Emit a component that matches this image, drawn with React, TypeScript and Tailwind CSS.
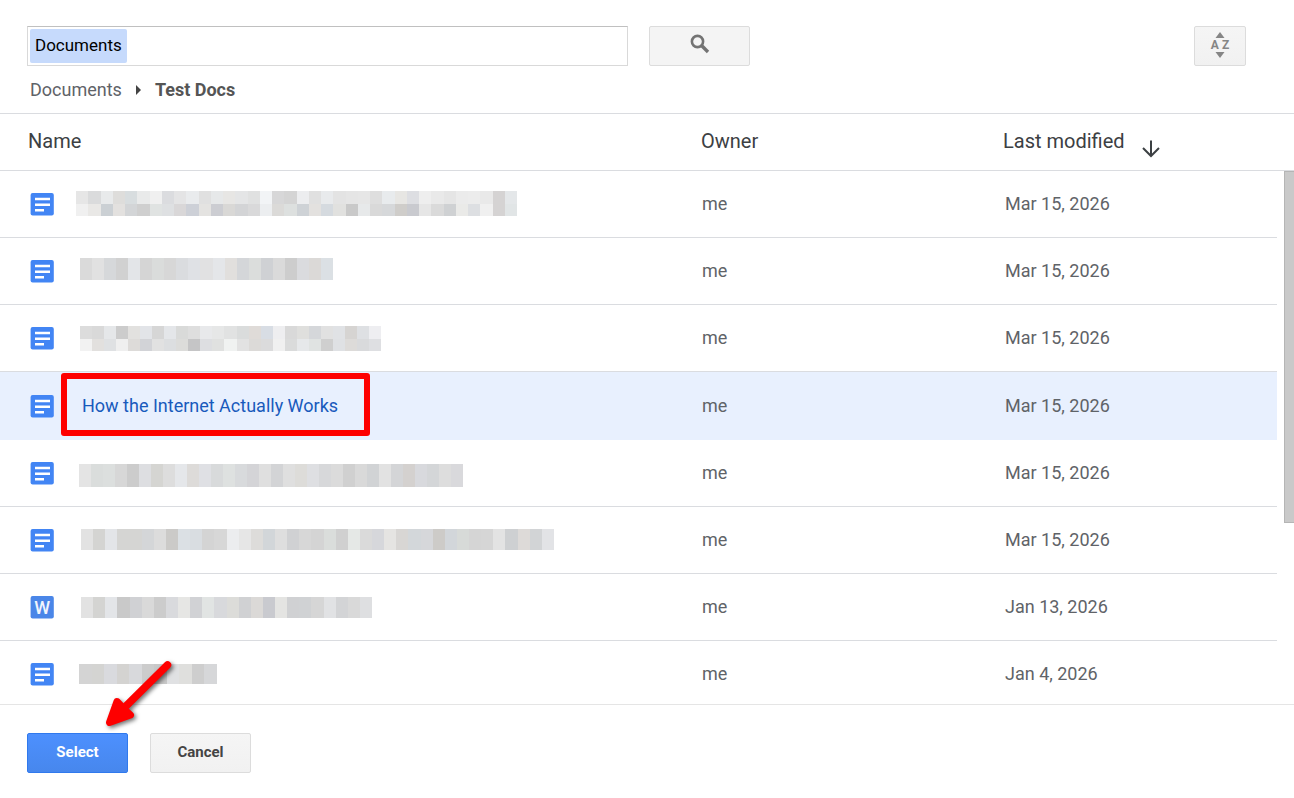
type Mosaic = {
  x: number
  y: number
  width: number
  height: number
  rows: string[]
}

type FileRow = {
  kind: "doc" | "word"
  name?: string
  mosaic?: Mosaic
  modified: string
}

const files: FileRow[] = [
  {
    kind: "doc",
    modified: "Mar 15, 2026",
    mosaic: {
      x: 0,
      y: 4,
      width: 441,
      height: 25,
      rows: [
        "e6e6e6 dadbdc e8eaeb dedddb d8dddf e9eaea f0f0f0 dbdcdf e4e4e5 e9ebed e0e0e0 e6e8e9 e7e6e4 e4e5e6 e0e1e1 f2f4f6 d7d7d8 d4d4d4 ecedef e0e0e0 e8eaec e3e3e3 e5e5e5 e6e6e6 dedede e8ebed e7e6e3 dddee2 eeeeee e9e9e9 e5e5e5 ebebeb ececec e9e9e9 d5d3d3 e4e7e9",
        "f0f0f0 e9e8e6 cbd0d4 e3e1df d3d5d7 cfcfcf e0e3e2 dee0e2 d9d7d8 cdd0d7 e4e3e1 cccdd2 d9d8d6 d3d4d6 d9d9da eceef0 dbdad8 dde0df ced2d6 e3e1df d5dadf e1e1df c9c9c9 e7e9ea d9d9d9 d6d8da cfcdca c9cacf e6e6e6 dadada cfd1d3 eaeae8 dddfe2 f0f0f0 d5d3d3 e1e5e6",
      ],
    },
  },
  {
    kind: "doc",
    modified: "Mar 15, 2026",
    mosaic: {
      x: 4,
      y: 4,
      width: 253,
      height: 22,
      rows: [
        "dadada e1e1e1 d6d8da d1d1d1 e3e5e8 d5d5d5 dadcdb d7d7d7 dadcdf dfe1e5 e1e1e2 e4e6e9 e1dfdd d4d6d9 dbdddc cfd1d4 dadada cdcdcd dadbde dbd9d7 dbe0e4",
      ],
    },
  },
  {
    kind: "doc",
    modified: "Mar 15, 2026",
    mosaic: {
      x: 4,
      y: 5,
      width: 301,
      height: 25,
      rows: [
        "dcdcdc d9d9d9 e5e7e9 cccccc e2e1df e2e4e8 d6d6d6 e4e6e9 d9dad9 dedede e8e9eb e6e7e7 e1e2e2 dadcdc dfdbd8 d8dde4 eeeef0 d9d9d9 dfdfdd d5d7da e1e1e1 e0e2e5 d6d4d2 dee0e3 eeeef1",
        "f2f2f2 e2e0de dfe1e3 efefef dddbd9 d2d3d7 e1e1e1 dcdee0 dcdcda c5c5c6 dddee1 e0e1e0 f0f2f1 e2e2e2 dcdad8 dbdbdc f0f0f0 dadbdb e6e8ea e0e3e2 cfcfcf dfe1e4 dddbd9 d9dadc dedfe2",
      ],
    },
  },
  { kind: "doc", name: "How the Internet Actually Works", modified: "Mar 15, 2026" },
  {
    kind: "doc",
    modified: "Mar 15, 2026",
    mosaic: {
      x: 3,
      y: 8,
      width: 384,
      height: 23,
      rows: [
        "e4e4e4 dadddc dcdfde d7d7d7 cccccc dddee1 d5d5d2 dddddd e5e7ea dddbd9 dfe0e4 d8dadb dee1e0 d8dadc d4d4d7 dfdfdf d3d4d6 dfdfdf dddcd9 dedfe2 d7d8da dbdbdb d0d0d0 d9d9d9 d1d3d5 e2e2e2 d4d5d7 d4d1cf d8d9dd d4d6d8 dddddd d9d9dc",
      ],
    },
  },
  {
    kind: "doc",
    modified: "Mar 15, 2026",
    mosaic: {
      x: 5,
      y: 6,
      width: 473,
      height: 21,
      rows: [
        "e2e2e2 d4d4d2 e3e5e8 d5d5d3 d5d5d3 d4d6d8 dcdcdc cbcac8 dbe0e4 d9dde1 d4d4d4 d7d7d7 ecedef e6e6e6 dddcda d2d6d9 dedede d0d1d3 d7d7d7 d4d4d4 dadddb d0d0d0 e5e8e6 dadada d6d7db e5e4e2 d8d6d4 d3d7da d6d7da cdcbc8 d2d6da d7dad8 d5d5d5 d6d6d6 e3e3e3 ced0d2 dddad8 d2d4d6 e2e3e6",
      ],
    },
  },
  {
    kind: "word",
    modified: "Jan 13, 2026",
    mosaic: {
      x: 5,
      y: 7,
      width: 291,
      height: 21,
      rows: [
        "e2e2e2 d4d4d2 e3e5e8 c9c9c9 d0d1d4 d9d9d9 cccccc d9dadd e6e6e4 d1d2d5 e1e4e3 d8d9dc dcdcd9 d0d1d3 dbd9d7 c9cacf e4e4e2 d0d1d3 d0d2d4 d6d6d6 e1e2e4 d3d4d6 d9d9d9 dedfe1",
      ],
    },
  },
  {
    kind: "doc",
    modified: "Jan 4, 2026",
    mosaic: {
      x: 3,
      y: 7,
      width: 138,
      height: 20,
      rows: ["d4d4d4 d4d4d2 d9dade d4d3d1 d8d9dc cccccc c8c8c8 e0e1e3 dfdfdd cecece d6d7d9"],
    },
  },
]

function MosaicName({ mosaic }: { mosaic: Mosaic }) {
  const half = Math.ceil(mosaic.height / mosaic.rows.length)

  return (
    <svg className="h-[34px] w-[480px] shrink-0" viewBox="0 0 480 34" shapeRendering="crispEdges" aria-hidden="true">
      {mosaic.rows.map((row, r) => {
        const colors = row.split(" ")
        return colors.map((color, i) => {
          const left = Math.round((i * mosaic.width) / colors.length)
          const right = Math.round(((i + 1) * mosaic.width) / colors.length)
          return (
            <rect
              key={`${r}-${i}`}
              x={mosaic.x + left}
              y={mosaic.y + r * half}
              width={right - left}
              height={r === 0 ? half : mosaic.height - half}
              fill={`#${color}`}
            />
          )
        })
      })}
    </svg>
  )
}

function DocIcon() {
  return (
    <svg className="size-6 shrink-0" viewBox="0 0 24 24" aria-hidden="true">
      <rect x="0.6" y="1" width="23.2" height="22.6" rx="2" fill="#4285f4" />
      <path d="M5 5.800h15v2.500H5zM5 11.400h15v2.500H5zM5 17h9v2.500H5z" fill="#fff" />
    </svg>
  )
}

function WordIcon() {
  return (
    <svg className="size-6 shrink-0" viewBox="0 0 24 24" aria-hidden="true">
      <rect x="0.6" y="1" width="23.2" height="22.6" rx="2" fill="#4a86e8" />
      <text x="12.2" y="19" fill="#f1f5fd" fontSize="18" fontWeight="500" textAnchor="middle">
        W
      </text>
    </svg>
  )
}

function SearchIcon() {
  return (
    <svg className="size-5" viewBox="0 0 20 20" fill="none" stroke="#737373" aria-hidden="true">
      <circle cx="7.5" cy="7.5" r="5.6" strokeWidth="2.6" />
      <path d="M11.8 11.8 18 18" strokeWidth="3.4" />
    </svg>
  )
}

function PointerArrow() {
  return (
    <svg
      className="pointer-events-none absolute -top-12 left-[100px] h-20 w-20 drop-shadow-[2px_2px_2px_rgba(0,0,0,0.55)]"
      viewBox="100 656 80 80"
      fill="#fe0000"
      stroke="#fe0000"
      strokeLinejoin="round"
      strokeLinecap="round"
      aria-hidden="true"
    >
      <path d="M167.500 664 121 710" strokeWidth="7.5" />
      <path d="M109.5 721.5 117 700.500 123.500 707.500 130.500 714Z" strokeWidth="7" />
    </svg>
  )
}

const columns = "grid grid-cols-[minmax(0,1fr)_302px_274px]"

export default function App() {
  return (
    <div className="flex h-screen flex-col overflow-hidden bg-white font-['Roboto',sans-serif] text-[#5f6368]">
      <header className="border-b border-[#dadce0] pt-[26px] pr-12 pb-[11px] pl-[27px]">
        <form className="flex items-start" onSubmit={(e) => e.preventDefault()}>
          <div className="h-10 w-[601px] border border-[#d9d9d9] border-t-[#c0c0c0] p-0.5">
            <input
              type="text"
              aria-label="Search"
              defaultValue="Documents"
              className="field-sizing-content block h-[34px] rounded-xs bg-[#c6dafc] px-[5px] pb-0.5 text-[17px] text-black outline-none"
            />
          </div>
          <button
            type="submit"
            aria-label="Search"
            className="ml-[21px] flex h-10 w-[101px] items-start justify-center rounded-xs border border-[#dcdcdc] bg-[#f4f4f4] pt-[7px]"
          >
            <SearchIcon />
          </button>
          <button
            type="button"
            aria-label="Sort"
            className="ml-auto flex h-10 w-[52px] flex-col items-center justify-center rounded-xs border border-[#dcdcdc] bg-linear-to-b from-[#f5f5f5] to-[#f1f1f1] pb-0.5 text-[#858585]"
          >
            <svg className="h-1.5 w-2.5" viewBox="0 0 10 6" fill="currentColor" aria-hidden="true">
              <path d="M5 0 9.500 6H0.500Z" />
            </svg>
            <span className="flex gap-[3px] text-xs leading-[14px] font-bold">
              <span>A</span>
              <span>Z</span>
            </span>
            <svg className="h-1.5 w-2.5" viewBox="0 0 10 6" fill="currentColor" aria-hidden="true">
              <path d="M5 6 9.500 0H0.500Z" />
            </svg>
          </button>
        </form>
        <nav className="mt-3 flex items-center pl-[3px] text-lg leading-6">
          <a href="#documents">Documents</a>
          <svg className="mx-3.5 h-2.5 w-[5px]" viewBox="0 0 5 10" fill="#444" aria-hidden="true">
            <path d="M0 0 5 5 0 10Z" />
          </svg>
          <span className="font-bold text-[#555]">Test Docs</span>
        </nav>
      </header>

      <table className="flex min-h-0 flex-1 flex-col text-lg">
        <thead className="block border-b border-[#dadce0] pr-[17px] text-left text-xl text-[#3c4043]">
          <tr className={`${columns} h-14 items-center pb-0.5`}>
            <th className="pl-7 font-normal">Name</th>
            <th className="font-normal">Owner</th>
            <th className="flex items-center gap-4 font-normal">
              Last modified
              <svg
                className="mt-4 h-[18px] w-5"
                viewBox="0 0 20 18"
                fill="none"
                stroke="#3c4043"
                strokeWidth="2"
                aria-hidden="true"
              >
                <path d="M10 0.500V16M2 8 10 16 18 8" />
              </svg>
            </th>
          </tr>
        </thead>
        <tbody className="relative block min-h-0 flex-1 overflow-hidden pr-[17px] after:absolute after:top-0 after:right-0 after:h-[66%] after:w-2.5 after:border after:border-r-0 after:border-[#b5b5b5] after:bg-[#c9c9c9] after:content-['']">
          {files.map((file, index) => (
            <tr
              key={index}
              className={`${columns} relative items-center ${
                file.name ? "h-[68px] bg-[#e8f0fe]" : "h-[67px] border-b border-[#dadce0]"
              }`}
            >
              <td className="flex items-center gap-[22px] pl-[30px]">
                {file.kind === "doc" ? <DocIcon /> : <WordIcon />}
                {file.mosaic && <MosaicName mosaic={file.mosaic} />}
                {file.name && (
                  <a href="#file" className="pl-1.5 text-[#185abc]">
                    {file.name}
                  </a>
                )}
                {file.name && (
                  <span className="pointer-events-none absolute top-px left-[61px] h-[63px] w-[309px] rounded-[3px] border-6 border-[#fe0000]" />
                )}
              </td>
              <td className="pl-px">me</td>
              <td className="pl-0.5">{file.modified}</td>
            </tr>
          ))}
        </tbody>
      </table>

      <footer className="relative flex gap-[22px] border-t border-[#e5e5e5] px-[27px] pt-7 pb-[25px] text-[15px] font-bold">
        <button
          type="button"
          className="h-10 w-[101px] rounded-xs border border-[#3079ed] bg-linear-to-b from-[#4d90fe] to-[#4787ed] pb-0.5 text-white"
        >
          Select
        </button>
        <button
          type="button"
          className="h-10 w-[101px] rounded-xs border border-[#dcdcdc] bg-linear-to-b from-[#f5f5f5] to-[#f1f1f1] pb-0.5 text-[#444]"
        >
          Cancel
        </button>
        <PointerArrow />
      </footer>
    </div>
  )
}
